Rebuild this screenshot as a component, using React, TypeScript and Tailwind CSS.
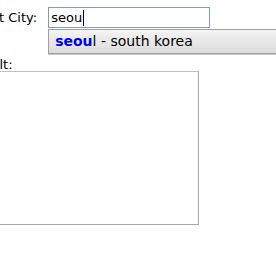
import React from 'react';

export default function App() {
  return (
    <div className="relative -ml-[36px] pt-[7px] font-['DejaVu_Sans',sans-serif] text-[13px] text-black">
      {/* City row */}
      <div className="flex items-center">
        <label className="mr-[11px] leading-none">Select City:</label>
        <div className="relative">
          <div className="flex h-[21px] w-[162px] items-center border border-[#7f9db9] bg-white pl-[2px]">
            <span>seou</span>
            <span className="ml-px h-[16px] w-px bg-black" />
          </div>
          {/* suggestion dropdown */}
          <div className="absolute left-0 top-[22px] z-10 flex h-[25px] w-[260px] items-center border border-[#a0a0a0] bg-gradient-to-b from-[#f4f4f4] to-[#dcdcdc] pl-[6px] text-[14px] shadow-[0_1px_0_#c8c8c8]">
            <span className="font-bold text-[#0000e0]">seou</span>
            <span>l - south korea</span>
          </div>
        </div>
      </div>

      {/* Result */}
      <div className="ml-[4px] mt-[30px] leading-none">Result:</div>
      <textarea
        readOnly
        className="block h-[154px] w-[235px] resize-none border border-t-[#c0c0c0] border-l-[#c0c0c0] border-r-[#a8a8a8] border-b-[#a8a8a8] bg-white outline-none"
      />
    </div>
  );
}
